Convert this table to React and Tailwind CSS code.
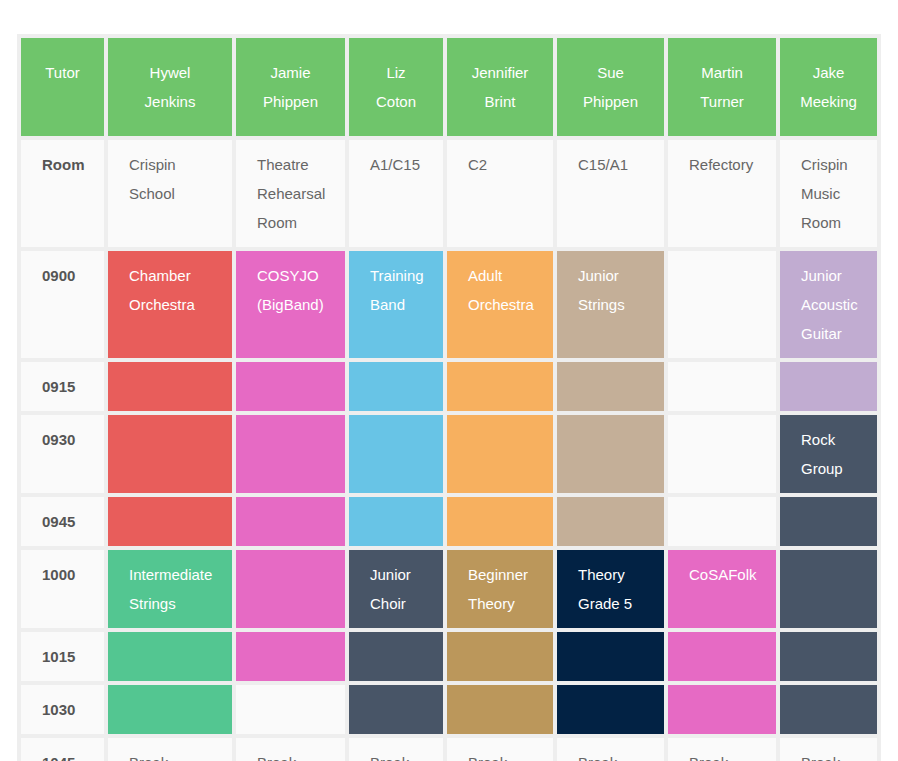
const tutors = [
  ['Hywel', 'Jenkins'],
  ['Jamie', 'Phippen'],
  ['Liz', 'Coton'],
  ['Jennifier', 'Brint'],
  ['Sue', 'Phippen'],
  ['Martin', 'Turner'],
  ['Jake', 'Meeking'],
];

const rooms = [
  ['Crispin', 'School'],
  ['Theatre', 'Rehearsal', 'Room'],
  ['A1/C15'],
  ['C2'],
  ['C15/A1'],
  ['Refectory'],
  ['Crispin', 'Music', 'Room'],
];

const widths = ['w-[83px]', 'w-[124px]', 'w-[109px]', 'w-[94px]', 'w-[106px]', 'w-[107px]', 'w-[108px]', 'w-[97px]'];

const red = 'bg-[#e85d5b]';
const pink = 'bg-[#e66ac4]';
const blue = 'bg-[#68c4e6]';
const orange = 'bg-[#f7b05f]';
const tan = 'bg-[#c4af98]';
const lilac = 'bg-[#c1acd1]';
const slate = 'bg-[#485567]';
const mint = 'bg-[#53c691]';
const gold = 'bg-[#bb975b]';
const navy = 'bg-[#022244]';

// each slot: [time, [[colour, lines] | null, ...]]
const slots = [
  ['0900', [
    [red, ['Chamber', 'Orchestra']],
    [pink, ['COSYJO', '(BigBand)']],
    [blue, ['Training', 'Band']],
    [orange, ['Adult', 'Orchestra']],
    [tan, ['Junior', 'Strings']],
    null,
    [lilac, ['Junior', 'Acoustic', 'Guitar']],
  ]],
  ['0915', [[red], [pink], [blue], [orange], [tan], null, [lilac]]],
  ['0930', [[red], [pink], [blue], [orange], [tan], null, [slate, ['Rock', 'Group']]]],
  ['0945', [[red], [pink], [blue], [orange], [tan], null, [slate]]],
  ['1000', [
    [mint, ['Intermediate', 'Strings']],
    [pink],
    [slate, ['Junior', 'Choir']],
    [gold, ['Beginner', 'Theory']],
    [navy, ['Theory', 'Grade 5']],
    [pink, ['CoSAFolk']],
    [slate],
  ]],
  ['1015', [[mint], [pink], [slate], [gold], [navy], [pink], [slate]]],
  ['1030', [[mint], null, [slate], [gold], [navy], [pink], [slate]]],
  ['1045', Array(7).fill(['', ['Break']])],
];

function Lines({ lines }) {
  if (!lines) return null;
  return lines.map((l, i) => (
    <div key={i} className="whitespace-nowrap">{l}</div>
  ));
}

export default function App() {
  return (
    <div className="min-h-screen bg-white pt-[34px] pl-[17px] font-['Liberation_Sans',Arial,sans-serif] text-[15px] leading-[29px] text-[#666]">
      <table className="table-fixed border-separate border-spacing-[4px] bg-[#eeeeee] w-[864px]">
        <colgroup>
          {widths.map((w, i) => <col key={i} className={w} />)}
        </colgroup>
        <thead>
          <tr>
            <th className="bg-[#6fc56b] text-white font-normal text-center align-top py-5">Tutor</th>
            {tutors.map((t, i) => (
              <th key={i} className="bg-[#6fc56b] text-white font-normal text-center align-top py-5">
                <Lines lines={t} />
              </th>
            ))}
          </tr>
        </thead>
        <tbody>
          <tr>
            <td className="bg-[#fafafa] align-top py-[10px] pl-[21px] font-bold text-[#555]">Room</td>
            {rooms.map((r, i) => (
              <td key={i} className="bg-[#fafafa] align-top py-[10px] pl-[21px]">
                <Lines lines={r} />
              </td>
            ))}
          </tr>
          {slots.map(([time, cells]) => (
            <tr key={time}>
              <td className="bg-[#fafafa] align-top py-[10px] pl-[21px] font-bold text-[#555]">{time}</td>
              {cells.map((c, i) => (
                <td
                  key={i}
                  className={`align-top py-[10px] pl-[21px] ${c && c[0] ? `${c[0]} text-white` : 'bg-[#fafafa]'}`}
                >
                  {c && c[1] ? <Lines lines={c[1]} /> : <div>&nbsp;</div>}
                </td>
              ))}
            </tr>
          ))}
        </tbody>
      </table>
    </div>
  );
}
